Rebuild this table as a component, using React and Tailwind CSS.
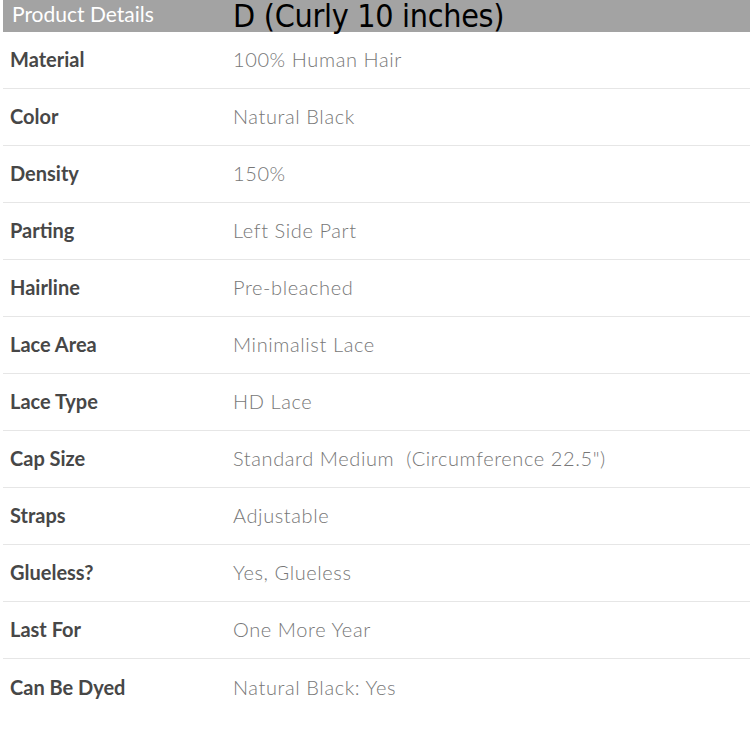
const ROWS = [
    ["Material", "100% Human Hair"],
    ["Color", "Natural Black"],
    ["Density", "150%"],
    ["Parting", "Left Side Part"],
    ["Hairline", "Pre-bleached"],
    ["Lace Area", "Minimalist Lace"],
    ["Lace Type", "HD Lace"],
    ["Cap Size", "Standard Medium\u00a0 (Circumference 22.5\")"],
    ["Straps", "Adjustable"],
    ["Glueless?", "Yes, Glueless"],
    ["Last For", "One More Year"],
    ["Can Be Dyed", "Natural Black: Yes"],
];

export default function App() {
    return (
        <div className="w-[750px] h-[750px] bg-white overflow-hidden font-['Lato',sans-serif]">
            <div className="ml-[3px] h-[32px] bg-[#a3a3a3] flex items-start">
                <span className="w-[230px] pl-[9px] text-white text-[21px] leading-[28px]">Product Details</span>
                <span className="text-black text-[32px] leading-[32px] font-['DejaVu_Sans_Condensed','DejaVu_Sans',sans-serif] font-light tracking-[-0.3px]">
                    D (Curly 10 inches)
                </span>
            </div>
            <div className="ml-[3px]">
                {ROWS.map(([label, value], i) => (
                    <div key={label}
                        className={`h-[57px] flex items-center ${i < ROWS.length - 1 ? "border-b border-[#e6e6e6]" : ""}`}
                    >
                        <span className="w-[230px] pl-[7px] text-[20px] font-bold text-[#474747] -mt-[2px]">{label}</span>
                        <span className="text-[20px] font-light text-[#777] tracking-[0.6px] -mt-[2px]">{value}</span>
                    </div>
                ))}
            </div>
        </div>
    );
}
